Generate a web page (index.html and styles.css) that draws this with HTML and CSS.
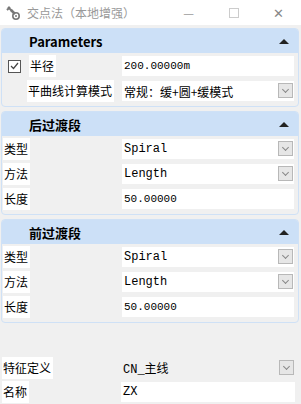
FILE: index.html
```html
<!DOCTYPE html>
<html lang="zh">
<head>
    <meta charset="UTF-8">
    <title>交点法（本地增强）</title>
    <link rel="stylesheet" href="styles.css">
</head>
<body>
    <div class="titlebar">
        <svg class="app-icon" width="14" height="16" viewBox="0 0 14 16">
            <path d="M2 2 L6 6 M1 5 L4 2" stroke="#777" stroke-width="2" fill="none"/>
            <path d="M5 5 L9 9" stroke="#777" stroke-width="2.5"/>
            <circle cx="10" cy="11" r="3.2" fill="none" stroke="#777" stroke-width="1.6"/>
            <circle cx="10" cy="11" r="1" fill="#777"/>
        </svg>
        <span class="title">交点法（本地增强）</span>
        <span class="win-btn">&#8212;</span>
        <span class="win-btn max"></span>
        <span class="win-btn close">&#10005;</span>
    </div>

    <div class="content">
        <div class="panel">
            <div class="panel-head"><span>Parameters</span><span class="chev"></span></div>
            <div class="panel-body">
                <div class="row">
                    <div class="label-cell">
                        <span class="check">
                            <svg width="9" height="8" viewBox="0 0 9 8"><path d="M1 4 L3.5 6.5 L8 1" stroke="#444" stroke-width="1.2" fill="none"/></svg>
                        </span>
                        <span class="label">半径</span>
                    </div>
                    <div class="value sans">200.00000m</div>
                </div>
                <div class="row">
                    <div class="label-cell indent"><span class="label">平曲线计算模式</span></div>
                    <div class="value">常规：缓+圆+缓模式<span class="drop"></span></div>
                </div>
            </div>
        </div>

        <div class="panel">
            <div class="panel-head"><span>后过渡段</span><span class="chev"></span></div>
            <div class="panel-body">
                <div class="row">
                    <div class="label-cell"><span class="label">类型</span></div>
                    <div class="value mono">Spiral<span class="drop"></span></div>
                </div>
                <div class="row">
                    <div class="label-cell"><span class="label">方法</span></div>
                    <div class="value mono">Length<span class="drop"></span></div>
                </div>
                <div class="row">
                    <div class="label-cell"><span class="label">长度</span></div>
                    <div class="value sans">50.00000</div>
                </div>
            </div>
        </div>

        <div class="panel">
            <div class="panel-head"><span>前过渡段</span><span class="chev"></span></div>
            <div class="panel-body">
                <div class="row">
                    <div class="label-cell"><span class="label">类型</span></div>
                    <div class="value mono">Spiral<span class="drop"></span></div>
                </div>
                <div class="row">
                    <div class="label-cell"><span class="label">方法</span></div>
                    <div class="value mono">Length<span class="drop"></span></div>
                </div>
                <div class="row">
                    <div class="label-cell"><span class="label">长度</span></div>
                    <div class="value sans">50.00000</div>
                </div>
            </div>
        </div>

        <div class="extra">
            <div class="row">
                <div class="label-cell"><span class="label">特征定义</span></div>
                <div class="value mono plain">CN_主线<span class="drop"></span></div>
            </div>
            <div class="row">
                <div class="label-cell"><span class="label">名称</span></div>
                <div class="value mono">ZX</div>
            </div>
        </div>
    </div>
</body>
</html>
```

FILE: styles.css
```css
body {
    margin: 0;
    width: 301px;
    height: 404px;
    overflow: hidden;
    background-color: #f0f0f0;
    font-family: "Noto Sans CJK SC", "Liberation Sans", sans-serif;
    font-size: 12px;
    color: #000;
}

.titlebar {
    height: 25px;
    background-color: #fff;
    display: flex;
    align-items: center;
    padding-left: 6px;
}

.app-icon {
    margin-right: 7px;
}

.title {
    color: #999;
    font-size: 12px;
    flex: 1;
}

.win-btn {
    width: 45px;
    text-align: center;
    color: #999;
    font-size: 12px;
}

.win-btn.max {
    display: flex;
    justify-content: center;
}

.win-btn.max::before {
    content: "";
    width: 8px;
    height: 8px;
    border: 1px solid #ccc;
}

.win-btn.close {
    font-size: 13px;
    color: #888;
}

.content {
    padding: 3px 2px 0 1px;
    display: flex;
    flex-direction: column;
    gap: 4px;
}

.panel {
    border: 1px solid #cfe1f6;
    border-radius: 4px;
    background-color: #f0f0f0;
}

.panel-head {
    height: 24px;
    background-color: #cce0f7;
    border-radius: 3px 3px 0 0;
    display: flex;
    align-items: center;
    justify-content: space-between;
    padding: 0 9px 0 27px;
    font-weight: bold;
    font-size: 13px;
}

.chev {
    width: 0;
    height: 0;
    border-left: 5px solid transparent;
    border-right: 5px solid transparent;
    border-bottom: 5px solid #222;
}

.panel-body {
    padding: 2px 0 4px;
    display: flex;
    flex-direction: column;
    gap: 3px;
}

.row {
    display: grid;
    grid-template-columns: 120px 1fr;
    height: 22px;
}

.label-cell {
    display: flex;
    align-items: center;
    padding-left: 1px;
}

.label-cell.indent {
    padding-left: 25px;
}

.label {
    background-color: #fff;
    height: 22px;
    line-height: 21px;
    padding: 0 2px 0 1px;
}

.check {
    width: 11px;
    height: 11px;
    border: 1px solid #555;
    background-color: #fff;
    margin: 0 8px 0 5px;
    display: flex;
    align-items: center;
    justify-content: center;
}

.value {
    background-color: #fff;
    height: 20px;
    margin: 1px 4px 1px 0;
    padding-left: 2px;
    display: flex;
    align-items: center;
    position: relative;
}

.value.plain {
    background-color: transparent;
}

.mono {
    font-family: "Liberation Mono", "Noto Sans CJK SC", monospace;
}

.sans {
    font-family: "Liberation Mono", monospace;
    font-size: 11px;
}

.drop {
    position: absolute;
    right: 1px;
    top: 2px;
    width: 15px;
    height: 15px;
    border: 1px solid #b8b8b8;
    background-color: #e6e6e6;
    box-sizing: border-box;
}

.drop::after {
    content: "";
    position: absolute;
    left: 4px;
    top: 3px;
    width: 4px;
    height: 4px;
    border-right: 1px solid #888;
    border-bottom: 1px solid #888;
    transform: rotate(45deg);
}

.extra {
    margin-top: 30px;
    display: flex;
    flex-direction: column;
    gap: 2px;
}
```
